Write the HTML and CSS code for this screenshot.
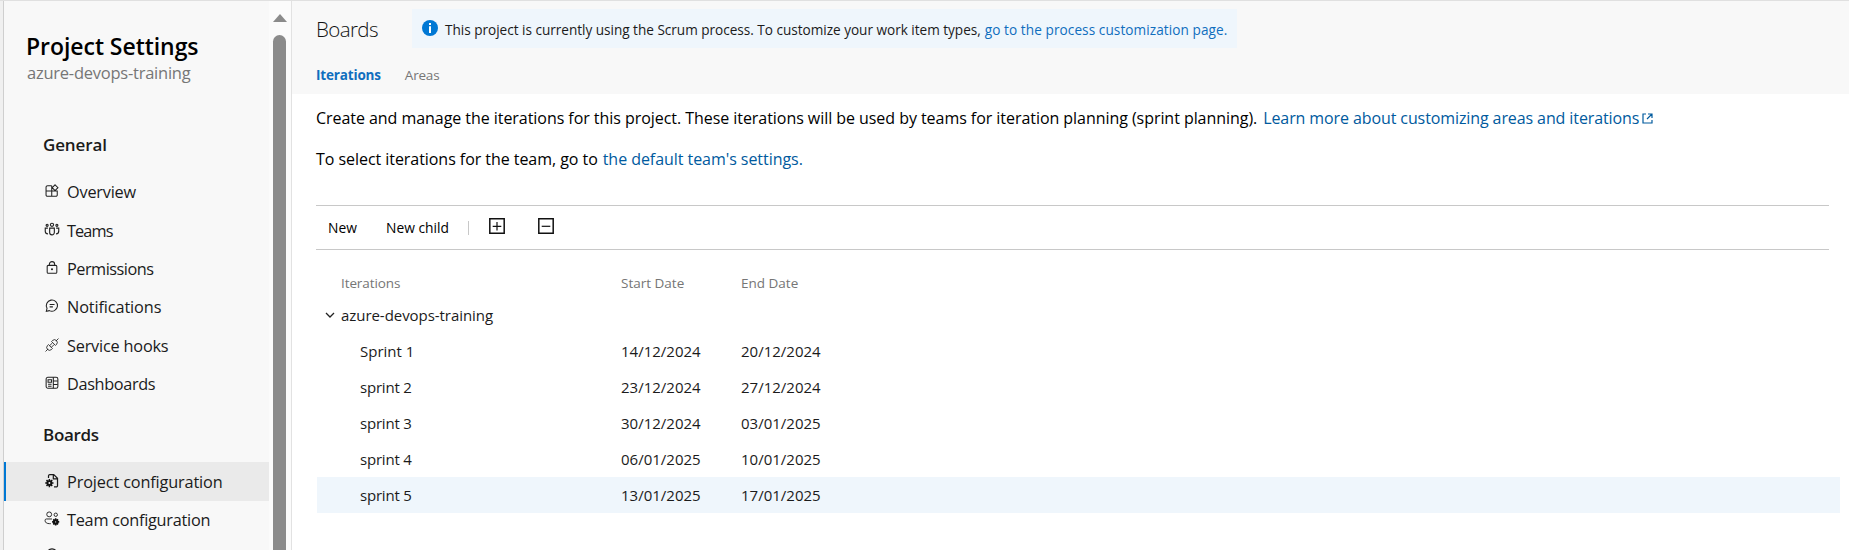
FILE: index.html
```html
<!DOCTYPE html>
<html lang="en">
<head>
<meta charset="utf-8">
<title>Project Settings - Boards</title>
<link rel="stylesheet" href="styles.css">
</head>
<body>
<div class="app">
  <aside class="sidebar">
    <div class="sidebar-content">
      <h1 class="sidebar-title">Project Settings</h1>
      <p class="sidebar-project">azure-devops-training</p>
      <h2 class="group-title">General</h2>
      <nav class="nav">
        <a class="nav-item overview"><svg class="nav-icon" viewBox="0 0 16 16"><path d="M7.700 2H3a1.800 1.800 0 0 0-1.800 1.800v8.700A1.500 1.500 0 0 0 2.700 14h9.800a1.500 1.500 0 0 0 1.500-1.500V8H1.200M7.700 2v12M11.500.9l3.300 3.300-3.300 3.300-3.300-3.300z"/></svg><span>Overview</span></a>
        <a class="nav-item teams"><svg class="nav-icon wide" viewBox="0 0 16 16"><circle cx="8" cy="3" r="1.700"/><circle cx="2.800" cy="3.500" r="1.100"/><circle cx="13.200" cy="3.500" r="1.100"/><path d="M5.500 6.500h5v4.700a2.500 2.500 0 0 1-5 0zM3.600 6.500H.8V10a2.800 2.800 0 0 0 2.900 2.600M12.400 6.500h2.800V10a2.800 2.800 0 0 1-2.900 2.600"/></svg><span>Teams</span></a>
        <a class="nav-item permissions"><svg class="nav-icon" viewBox="0 0 16 16"><rect x="2.500" y="5" width="11" height="9" rx="1.200"/><path d="M5 5V3.700a3 3 0 0 1 6 0V5"/><circle class="solid" cx="8" cy="9.500" r="1.200"/></svg><span>Permissions</span></a>
        <a class="nav-item notifications"><svg class="nav-icon" viewBox="0 0 16 16"><path d="M1.500 14l.8-3.300A6.400 6.400 0 1 1 5 13.300zM5.300 6.300h5.600M5.300 9h3.700"/></svg><span>Notifications</span></a>
        <a class="nav-item hooks"><svg class="nav-icon" viewBox="0 0 16 16"><path class="fine" d="M.6 15.400l2.900-2.900M12.500 3.500L15.400.6M7.500 4l4.500 4.500 1.300-1.300a3.200 3.200 0 0 0-4.500-4.500zM4 7.500L8.500 12l-1.300 1.300a3.200 3.200 0 0 1-4.500-4.500zM5.300 8.800l3.200-3.200M7.200 10.700l3.200-3.200"/></svg><span>Service hooks</span></a>
        <a class="nav-item dashboards"><svg class="nav-icon" viewBox="0 0 16 16"><rect x="1.300" y="1.500" width="13.400" height="12.500" rx="2"/><path d="M9.500 1.500V14M9.500 5.700h5M9.500 9.800h5M3.500 4.200h4v3h-4zM3.500 9.400h4M3.500 11.700h4"/></svg><span>Dashboards</span></a>
      </nav>
      <h2 class="group-title boards">Boards</h2>
      <nav class="nav">
        <a class="nav-item active project"><svg class="nav-icon" viewBox="0 0 16 16"><path class="bold" d="M4 4.500V2A1.500 1.500 0 0 1 5.500.7H10l4.300 4.200v8.400a1.500 1.500 0 0 1-1.500 1.500h-2.500M9.500 1v4.500H14"/><path class="teeth" d="M5 5.600v9.400M.3 10.300h9.400M1.700 7l6.600 6.600M8.300 7l-6.600 6.600"/><circle class="gear" cx="5" cy="10.300" r="2.200"/></svg><span>Project configuration</span></a>
        <a class="nav-item team"><svg class="nav-icon wide" viewBox="0 0 16 16"><circle class="fine" cx="5" cy="3.600" r="2.600"/><circle class="fine" cx="12" cy="4" r="1.800"/><path class="fine" d="M8 8.500H2A1.500 1.500 0 0 0 .6 10c0 2.500 2 3.500 4.900 3.500h1.200"/><path class="teeth" d="M11.900 7.800v7.600M8.100 11.600h7.600M9.300 9l5.200 5.200M14.500 9l-5.200 5.200"/><circle class="gear" cx="11.900" cy="11.600" r="1.700"/></svg><span>Team configuration</span></a>
        <a class="nav-item cut"><svg class="nav-icon" viewBox="0 0 16 16"><circle class="bold" cx="8" cy="7" r="6"/></svg></a>
      </nav>
    </div>
    <div class="scrollbar"><span class="scroll-up"></span><span class="scroll-thumb"></span></div>
  </aside>

  <main class="main">
    <header class="page-header">
      <div class="header-row">
        <h2 class="page-title">Boards</h2>
        <div class="banner">
          <svg class="info-icon" viewBox="0 0 16 16"><circle cx="8" cy="8" r="8"/><path d="M7 3h2v2H7zM7 6.300h2V13H7z"/></svg>
          <span class="banner-text">This project is currently using the Scrum process. To customize your work item types,</span>
          <a class="banner-link">go to the process customization page.</a>
        </div>
      </div>
      <div class="tabs"><a class="tab selected">Iterations</a><a class="tab">Areas</a></div>
    </header>

    <section class="content">
      <p class="intro first"><span>Create and manage the iterations for this project. These iterations will be used by teams for iteration planning (sprint planning).</span>
        <a class="link learn">Learn more about customizing areas and iterations</a><svg class="external" viewBox="0 0 11 11"><path d="M4 1H1v9h9V7M6 1h4v4M10 1L5 6"/></svg></p>
      <p class="intro"><span>To select iterations for the team, go to</span> <a class="link">the default team's settings.</a></p>

      <div class="toolbar">
        <span class="tool new">New</span>
        <span class="tool child">New child</span>
        <span class="divider"></span>
        <svg class="box-icon" viewBox="0 0 16 16"><path d="M.8.8h14.400v14.400H.8z"/><path class="thin" d="M8 4v8.500M3.700 8.300h8.600"/></svg>
        <svg class="box-icon" viewBox="0 0 16 16"><path d="M.8.8h14.400v14.400H.8z"/><path class="thin" d="M3.700 8.300h8.600"/></svg>
      </div>

      <div class="grid">
        <div class="row head"><span class="name">Iterations</span><span>Start Date</span><span>End Date</span></div>
        <div class="row root"><span class="name"><svg class="chevron" viewBox="0 0 10 6"><path d="M1 1l4 4 4-4"/></svg>azure-devops-training</span></div>
        <div class="row"><span class="name sprint-one">Sprint 1</span><span>14/12/2024</span><span>20/12/2024</span></div>
        <div class="row"><span class="name">sprint 2</span><span>23/12/2024</span><span>27/12/2024</span></div>
        <div class="row"><span class="name">sprint 3</span><span>30/12/2024</span><span>03/01/2025</span></div>
        <div class="row"><span class="name">sprint 4</span><span>06/01/2025</span><span>10/01/2025</span></div>
        <div class="row highlighted"><span class="name">sprint 5</span><span>13/01/2025</span><span>17/01/2025</span></div>
      </div>
    </section>
  </main>
</div>
</body>
</html>
```
FILE: styles.css
```css
* { box-sizing: border-box; }
html, body { margin: 0; height: 100%; overflow: hidden; }
body { font-family: "Open Sans", "Noto Sans", sans-serif; color: #1b1b1b; background: #fff; }
h1, h2, p { margin: 0; font-weight: 400; white-space: nowrap; }
svg { display: block; fill: none; flex: none; }

.app { display: flex; height: 550px; border-top: 1px solid #e0e0e0; overflow: hidden; }

/* Sidebar */
.sidebar { display: flex; width: 292px; flex: none; border-right: 1px solid #e2e2e2; background: #f8f8f8; }
.sidebar::before { content: ""; width: 3px; flex: none; background: #f0f0f0; border-right: 1px solid #cfcfcf; }
.sidebar-content { width: 265px; flex: none; padding-top: 29px; }
.sidebar-title { padding-left: 22px; font-size: 23px; line-height: 32px; font-weight: 600; letter-spacing: -.05px; color: #000; }
.sidebar-project { padding-left: 23px; font-size: 16.5px; line-height: 22px; letter-spacing: -.24px; color: #767676; }
.group-title { margin: 49px 0 16px; padding-left: 39px; font-size: 17px; line-height: 24px; font-weight: 600; letter-spacing: -.13px; }
.group-title.boards { margin: 20px 0 15px; letter-spacing: -.33px; }
.nav-item { display: flex; align-items: center; height: 38.400px; padding-left: 41px; font-size: 16.300px; line-height: 24px; white-space: nowrap; }
.nav-icon { width: 14px; height: 14px; margin: 0 9px 2px 0; stroke: #222; stroke-width: 1.200; }
.nav-icon.wide { width: 16px; height: 15px; margin: 0 8px 2px -1px; }
.nav-item .fine { stroke-width: 1; }
.nav-item .bold { stroke: #1b1b1b; stroke-width: 1.400; }
.nav-icon .solid { fill: #222; stroke: none; }
.nav-icon .gear { fill: #f4f4f4; stroke: #111; stroke-width: 2.200; }
.nav-icon .teeth { stroke: #111; stroke-width: 1.700; }
.nav-item span { margin-left: -1px; }
.overview { letter-spacing: -.21px; }
.teams { letter-spacing: -.9px; }
.permissions { letter-spacing: -.5px; }
.notifications { letter-spacing: -.12px; }
.hooks { letter-spacing: -.2px; }
.dashboards { letter-spacing: -.35px; }
.project { letter-spacing: -.15px; }
.team { letter-spacing: -.26px; }
.active { background: #eaeaea; border-left: 2px solid #0078d4; padding-left: 39px; }
.cut { align-items: flex-start; padding-top: 9px; }

.scrollbar { display: flex; flex-direction: column; align-items: center; flex: 1; padding: 13px 1px 0 0; background: #fbfbfb; }
.scroll-up { border: 7.500px solid transparent; border-top: 0; border-bottom: 8px solid #8b8b8b; }
.scroll-thumb { width: 13px; height: 540px; margin-top: 13px; flex: none; border-radius: 7px; background: #8b8b8b; }

/* Page header */
.main { flex: 1; min-width: 0; }
.page-header { height: 93px; padding-left: 24px; background: #f8f8f8; }
.header-row { display: flex; padding-top: 8px; height: 47px; }
.page-title { width: 96px; font-size: 20.500px; line-height: 40px; font-weight: 300; letter-spacing: -.6px; color: #111; }
.banner { display: flex; align-items: center; width: 825px; height: 39px; padding-left: 10px; background: #eff6fc; font-size: 13.600px; white-space: nowrap; }
.info-icon { width: 16px; height: 16px; margin-bottom: 1px; }
.info-icon circle { fill: #0078d4; }
.info-icon path { fill: #fff; }
.banner-text { margin: 2px 4px 0 7px; letter-spacing: -.02px; }
.banner-link { margin-top: 2px; letter-spacing: .08px; color: #106ebe; }
.tabs { display: flex; gap: 24px; padding-top: 17px; font-size: 13.500px; line-height: 20px; }
.tab { letter-spacing: -.2px; color: #767676; }
.tab.selected { font-weight: 700; letter-spacing: -.17px; color: #106ebe; }

/* Content */
.content { padding-left: 24px; }
.intro { display: flex; align-items: center; gap: 5px; margin-bottom: 17px; font-size: 16px; line-height: 24px; letter-spacing: -.05px; color: #000; }
.intro.first { padding-top: 12px; gap: 3px; }
.link { color: #005a9e; }
.learn { margin-left: 3px; letter-spacing: -.1px; }
.external { width: 11px; height: 11px; stroke: #005a9e; stroke-width: 1.200; }
.toolbar { display: flex; align-items: center; width: 1513px; height: 45px; margin-top: 34px; padding-left: 12px; border: 1px solid #c8c8c8; border-width: 1px 0; font-size: 13.800px; color: #000; }
.tool.new { width: 58px; }
.tool.child { width: 82px; }
.divider { width: 1px; height: 14px; margin-right: 20px; background: #c8c8c8; }
.box-icon { width: 16px; height: 16px; margin: 0 33px 3px 0; stroke: #111; stroke-width: 1.500; }
.box-icon .thin { stroke-width: 1.200; }

/* Iterations grid */
.grid { margin: 15px 0 0 1px; width: 1523px; font-size: 15px; }
.row { display: grid; grid-template-columns: 261px 120px 120px; align-items: center; height: 36px; padding-left: 43px; white-space: nowrap; }
.row .name { letter-spacing: -.2px; }
.row .sprint-one { letter-spacing: 0; }
.row.head, .row.root { grid-template-columns: 280px 120px 120px; padding-left: 24px; }
.row.head { font-size: 13.500px; color: #767676; }
.row.head .name { letter-spacing: -.1px; }
.row.root { height: 28px; margin-bottom: 4px; padding-left: 8px; }
.row.root .name { display: flex; align-items: center; letter-spacing: -.05px; }
.chevron { width: 10px; height: 6px; margin-right: 6px; stroke: #222; stroke-width: 1.300; }
.highlighted { background: #eff6fc; }
```
